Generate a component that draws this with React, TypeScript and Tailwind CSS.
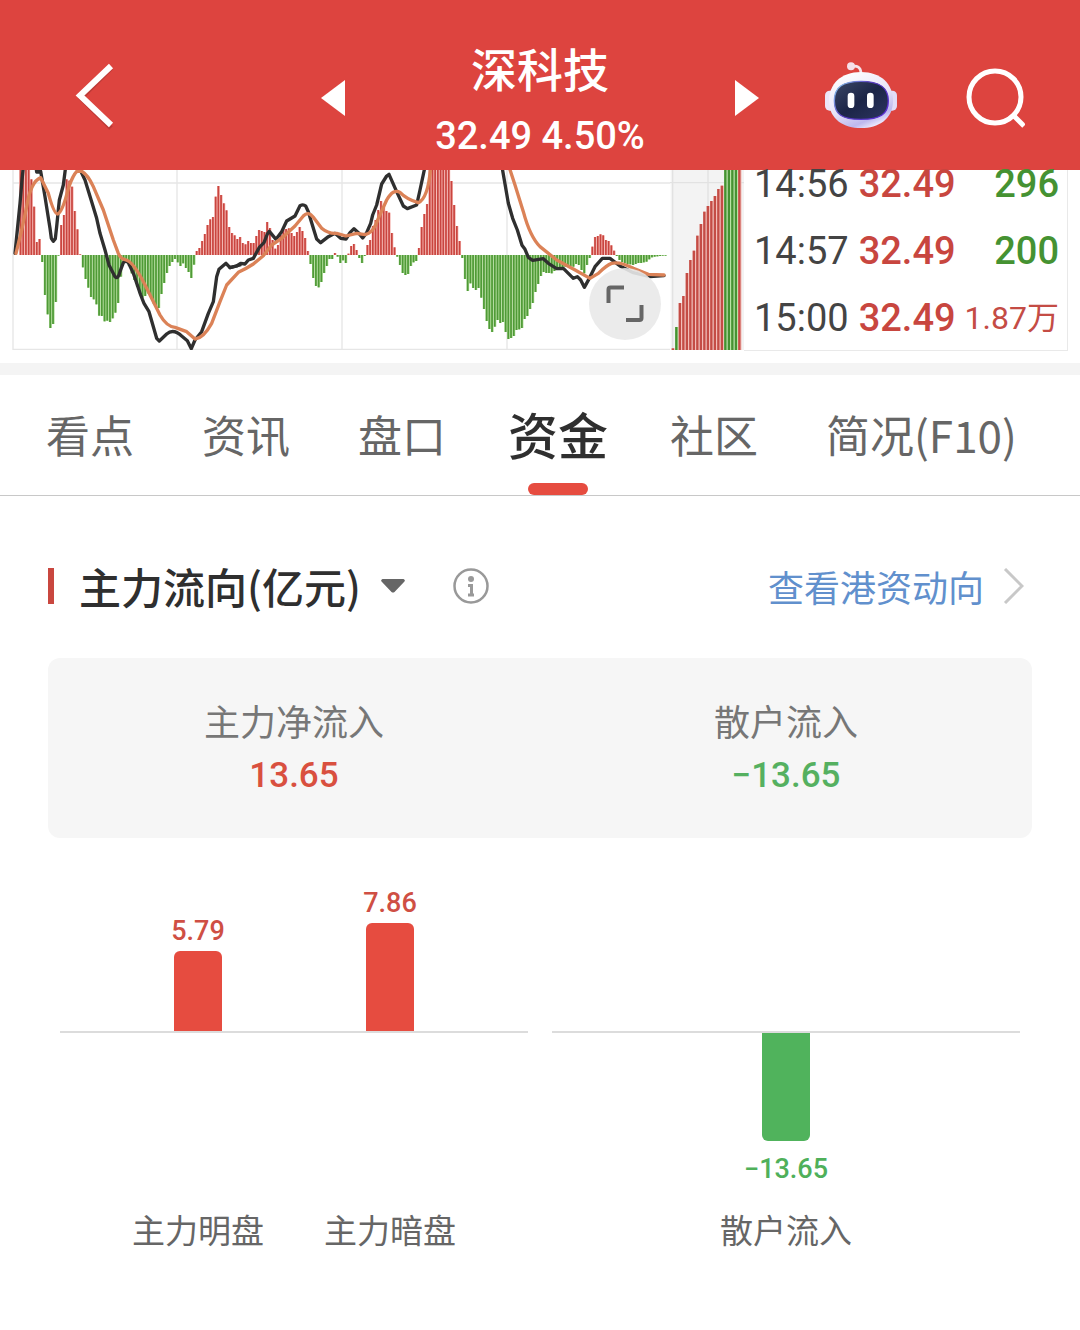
import React from "react";

const MACD_BARS: number[] = [
  -200, -200, -200, -200, 58, 140, 246, 237, 306, 405, 463, 504, 492, 426, 287, 195, 165, 58, 62, 80, 153, 208, 283,
  322, 357, 383, 411, 418, 433, 467, 468, 484, 482, 486, 475, 458, 429, 350, 308, 308, 318, 340, 360, 380, 400, 413,
  408, 400, 410, 430, 440, 444, 402, 369, 339, 318, 306, 297, 307, 318, 310, 324, 336, 354, 314, 273, 264, 243, 222,
  195, 178, 171, 110, 78, 105, 130, 151, 201, 219, 226, 237, 231, 249, 253, 243, 249, 249, 228, 210, 213, 216, 186,
  204, 240, 266, 255, 225, 208, 207, 205, 219, 228, 216, 201, 213, 234, 273, 312, 354, 378, 382, 366, 339, 318, 297,
  297, 279, 290, 309, 301, 309, 281, 258, 252, 270, 294, 309, 288, 255, 240, 198, 180, 150, 123, 140, 153, 158, 219,
  262, 290, 315, 339, 345, 342, 318, 307, 303, 264, 201, 162, 132, -200, -200, -200, -200, -200, -200, -200, -200, 63,
  135, 198, 243, 294, 357, 393, 370, 384, 390, 384, 413, 447, 483, 507, 516, 500, 480, 489, 486, 516, 537, 534, 528,
  510, 508, 504, 477, 468, 447, 429, 396, 372, 348, 336, 339, 339, 340, 333, 325, 325, 325, 320, 318, 318, 320, 312,
  315, 330, 340, 315, 294, 260, 231, 228, 223, 226, 240, 243, 256, 272, 288, 300, 306, 309, 312, 313, 315, 312, 309,
  309, 307, 305, 298, 292, 290, 289, 288, 287, 287,
];
const BASE = 285;
const FIRST_X = 62;
const STEP = (1997 - FIRST_X) / (MACD_BARS.length - 1);

const DEPTH_BARS: number[] = [565, 501, 429, 408, 339, 300, 272, 227, 192, 155, 138, 123, 108, 87, 77, 0, 0, 0, 0, 0];

const isGreenDepth = (i: number) => i === 1 || (i >= 15 && i <= 18);

function MacdChart() {
  return (
    <svg viewBox="0 30 2232 540" className="block w-full overflow-hidden" role="img" aria-label="MACD">
      <g stroke="#e6e6e6" strokeWidth="4" fill="none">
        <path d="M39 0V570M531 0V570M1026 0V570M1521 0V570M37 69H2010M37 568H2010" />
      </g>
      <rect x="2012" y="0" width="220" height="572" fill="#f3f3f3" />
      <path d="M2018 0V570M2124 0V570M2010 68H2232" stroke="#e2e2e2" strokeWidth="4" />
      {MACD_BARS.map((y, i) => {
        const up = y < BASE;
        const x = FIRST_X + i * STEP;
        return (
          <g key={i}>
            <rect
              x={x - 4}
              y={up ? y : BASE}
              width={8}
              height={Math.max(2, Math.abs(BASE - y))}
              fill={up ? "#f3aaa5" : "#a5d68b"}
            />
            <rect
              x={x - 3}
              y={up ? y : BASE}
              width={5}
              height={Math.max(2, Math.abs(BASE - y))}
              fill={up ? "#c9453f" : "#4f9a37"}
            />
          </g>
        );
      })}
      {DEPTH_BARS.map((y, i) => (
        <g key={i}>
          <rect
            x={2015 + i * 10.5}
            y={y}
            width="10"
            height={570 - y}
            fill={isGreenDepth(i) ? "#b9e3a4" : "#f3bdb8"}
          />
          <rect
            x={2015 + i * 10.5}
            y={y}
            width="7"
            height={570 - y}
            fill={isGreenDepth(i) ? "#459232" : "#c44c45"}
          />
        </g>
      ))}
      <g fill="none" stroke="#2f2f2f" strokeWidth="10" strokeLinejoin="round" strokeLinecap="round">
        <path d="M45 280L52 210L60 130L66 60L70 20M108 20L110 36L122 34L135 110L150 205L154 235L160 244L166 236L170 200L178 120L190 75L197 20M236 20L255 60L275 125L290 175L300 220L315 270L327 315L345 350Q354 360 360 335L370 308Q378 300 385 308L400 340L422 405L432 430L447 455L470 535L478 543L500 522Q520 505 545 528L562 542L574 566L585 540L605 515L625 460L640 425L650 350L657 328L678 310L690 323L720 315" />
        <path
          transform="translate(660 0)"
          d="M30 323L50 318L62 310L75 312L85 300L100 295L118 262L132 248L142 222L148 214L168 238L185 215L200 183L225 168L240 137Q250 132 257 138L265 155L280 205L290 237L302 248L325 230L345 220L362 235L378 237L390 218L402 206L415 218L428 234L440 218L452 190L458 165L470 135L485 72L500 48L507 43L518 68L530 95L550 138L562 146L590 135L600 90L615 20"
        />
        <path
          transform="translate(1320 0)"
          d="M186 20L192 55L205 130L218 175L232 210L246 256L255 268L265 292L278 301L310 296L325 310L350 326L370 325L400 355L412 350L422 360L433 382L448 355L465 320L487 295L510 295L540 318L580 338L630 350L672 347"
        />
      </g>
      <g fill="none" stroke="#db8257" strokeWidth="10" strokeLinejoin="round" strokeLinecap="round">
        <path d="M48 280L65 210L80 140Q92 65 122 53L145 100Q162 162 173 162Q188 155 205 85Q220 40 235 30Q260 35 280 80L310 150L340 240L355 280Q362 297 375 299Q400 302 440 385L480 465Q500 500 525 502L560 515L585 537Q610 535 635 490L660 425L680 375L715 337Q740 325 760 312L790 287L815 255L845 235L885 198L910 168Q925 152 940 172L965 205Q985 222 1010 220L1038 228L1070 220L1095 224Q1120 220 1135 175L1160 120Q1180 85 1200 97Q1220 118 1255 128Q1285 115 1292 20" />
        <path
          transform="translate(1320 0)"
          d="M207 20L225 75L250 155Q270 230 300 260L350 300L400 327L450 355L475 340Q500 315 515 310Q540 304 580 325L625 343L672 345"
        />
      </g>
    </svg>
  );
}

function RobotIcon() {
  return (
    <svg viewBox="0 0 216 200" className="block w-18" aria-hidden="true">
      <defs>
        <linearGradient id="shell" x1="0.2" y1="0" x2="0.7" y2="1">
          <stop offset="0" stopColor="#fff" />
          <stop offset="0.55" stopColor="#e8e4f8" />
          <stop offset="0.85" stopColor="#bdb8ee" />
          <stop offset="1" stopColor="#f4f2ff" />
        </linearGradient>
        <linearGradient id="face" x1="0" y1="0" x2="1" y2="1">
          <stop offset="0" stopColor="#3c4766" />
          <stop offset="0.5" stopColor="#1c2547" />
          <stop offset="1" stopColor="#2c3560" />
        </linearGradient>
        <linearGradient id="rim" x1="0" y1="0" x2="1" y2="0.6">
          <stop offset="0" stopColor="#8fd6f2" />
          <stop offset="0.5" stopColor="#5a3fc0" />
          <stop offset="1" stopColor="#5a2fd0" />
        </linearGradient>
      </defs>
      <path d="M80 13Q106 8 108 32" fill="none" stroke="#f6e3ea" strokeWidth="8" />
      <circle cx="78" cy="13" r="12" fill="#f6dfe8" />
      <rect x="0" y="86" width="32" height="60" rx="14" fill="#ece6f8" />
      <rect x="184" y="86" width="32" height="60" rx="14" fill="#e2dcf8" />
      <path
        d="M108 30C168 30 204 66 204 116C204 172 160 198 108 198C56 198 12 172 12 116C12 66 48 30 108 30Z"
        fill="url(#shell)"
      />
      <path
        d="M108 58C164 58 190 76 190 116C190 158 164 172 108 172C52 172 28 158 28 116C28 76 52 58 108 58Z"
        fill="url(#face)"
        stroke="url(#rim)"
        strokeWidth="4"
      />
      <rect x="68" y="92" width="20" height="46" rx="10" fill="#fff" />
      <rect x="126" y="92" width="20" height="46" rx="10" fill="#fff" />
    </svg>
  );
}

function Header() {
  return (
    <header className="grid h-[170px] grid-cols-[1fr_438px_1fr] bg-[#dd443f] text-white">
      <div className="pt-[62px] pl-[74px]">
        <button type="button" aria-label="返回" className="block">
          <svg viewBox="0 0 42 68" className="block w-[42px]" fill="none" aria-hidden="true">
            <path d="M37 6L7 36L37 66" stroke="#a93430" strokeOpacity="0.6" strokeWidth="5" />
            <path d="M37 4L6 33.500L37 63" stroke="#fff" strokeWidth="6" />
          </svg>
        </button>
      </div>
      <div className="flex justify-between">
        <button type="button" aria-label="上一只" className="mt-20 block h-9">
          <svg viewBox="0 0 24 36" className="block h-9" aria-hidden="true">
            <path d="M24 0V36L0 18Z" fill="#fff" />
          </svg>
        </button>
        <div className="flex flex-col items-center pt-9">
          <h1 className="text-[46px] leading-[62px] font-medium">深科技</h1>
          <p className="font-['Roboto'] text-[38px] leading-[76px] font-medium whitespace-nowrap">32.49 4.50%</p>
        </div>
        <button type="button" aria-label="下一只" className="mt-20 block h-9">
          <svg viewBox="0 0 24 36" className="block h-9" aria-hidden="true">
            <path d="M0 0V36L24 18Z" fill="#fff" />
          </svg>
        </button>
      </div>
      <div className="flex items-start justify-end gap-[66px] pt-[62px] pr-[55px]">
        <button type="button" aria-label="智能助手" className="block">
          <RobotIcon />
        </button>
        <button type="button" aria-label="搜索" className="mt-1 block">
          <svg viewBox="0 0 62 62" className="block w-[62px]" fill="none" stroke="#fff" strokeWidth="5" aria-hidden="true">
            <circle cx="32" cy="31" r="26" />
            <path d="M50 49L61 60" />
          </svg>
        </button>
      </div>
    </header>
  );
}

const TRADES = [
  { time: "14:56", price: "32.49", volume: "296", tone: "text-[38px] text-[#459232]" },
  { time: "14:57", price: "32.49", volume: "200", tone: "text-[38px] text-[#459232]" },
  { time: "15:00", price: "32.49", volume: "1.87万", tone: "text-[32px] font-normal text-[#c44c45]" },
];

function Quote() {
  return (
    <section className="flex h-[193px]">
      <div className="relative w-[744px] shrink-0">
        <MacdChart />
        <button
          type="button"
          aria-label="全屏"
          className="absolute top-[98px] left-[589px] size-18 rounded-full bg-[#e9e9e9]/90"
        >
          <svg viewBox="0 0 72 72" className="block" fill="none" stroke="#666" strokeWidth="4" aria-hidden="true">
            <path d="M19.500 35V21.500Q19.500 19.500 21.500 19.500H35M52.500 37V50Q52.500 52 50.500 52H37" />
          </svg>
        </button>
      </div>
      <div className="mr-3 h-[181px] flex-1 border-r border-b border-[#e9e9e9]">
        <table className="w-full font-['Roboto','Noto_Sans_CJK_SC',sans-serif] font-medium whitespace-nowrap">
          <tbody className="align-top leading-[28px]">
            {TRADES.map((t, i) => (
              <tr key={t.time} className={i < 2 ? "h-[67px]" : ""}>
                <td className="w-[104px] pl-2.5 text-[38px] font-normal text-[#444]">{t.time}</td>
                <td className="pl-2.5 text-[38px] text-[#c8463f]">{t.price}</td>
                <td className={`pr-2 text-right ${t.tone}`}>{t.volume}</td>
              </tr>
            ))}
          </tbody>
        </table>
      </div>
    </section>
  );
}

const TABS = ["看点", "资讯", "盘口", "资金", "社区", "简况(F10)"];

function Tabs() {
  return (
    <nav className="flex h-[121px] gap-17 border-b border-[#c8c8c8] pl-[46px] whitespace-nowrap">
      {TABS.map((tab) =>
        tab === "资金" ? (
          <button
            key={tab}
            type="button"
            aria-current="page"
            className="flex w-22 flex-col items-center justify-end text-[50px] leading-[100px] font-medium text-[#2f2f2f]"
          >
            {tab}
            <span className="h-3 w-15 rounded-full bg-[#e64c40]" />
          </button>
        ) : (
          <button key={tab} type="button" className="flex text-[44px] leading-[118px] text-[#666]">
            {tab}
          </button>
        ),
      )}
    </nav>
  );
}

function SectionTitle() {
  return (
    <div className="flex items-center pt-[60px] pr-14 pl-12">
      <span className="h-9 w-1.5 bg-[#c9473f]" />
      <button type="button" className="flex items-center text-[42px] leading-[60px] font-medium text-[#2f2f2f]">
        <span className="ml-[25px]">主力流向(亿元)</span>
        <svg viewBox="0 0 24 14" className="ml-5 block w-6" aria-hidden="true">
          <path d="M1.500 0H22.500Q25 1 23 3L13.500 13Q12 14 10.500 13L1 3Q-1 1 1.500 0Z" fill="#666" />
        </svg>
      </button>
      <button type="button" aria-label="说明" className="ml-12 block">
        <svg viewBox="0 0 36 36" className="block size-9" fill="none" stroke="#999" aria-hidden="true">
          <circle cx="18" cy="18" r="16.500" strokeWidth="2.500" />
          <circle cx="18" cy="11" r="3" fill="#999" stroke="none" />
          <path d="M15 17.500H18.500V27M15 27H21" strokeWidth="3" />
        </svg>
      </button>
      <a href="#hk" className="ml-auto flex items-center gap-[18px] text-[36px] leading-[60px] text-[#6190cd]">
        查看港资动向
        <svg viewBox="0 0 22 36" className="block h-9" fill="none" stroke="#c8c8c8" strokeWidth="3" aria-hidden="true">
          <path d="M3 1L20 18L3 35" />
        </svg>
      </a>
    </div>
  );
}

function Summary() {
  return (
    <dl className="mx-12 mt-[42px] grid h-[180px] grid-cols-2 rounded-xl bg-[#f6f6f6] pt-[34px] text-center">
      <div>
        <dt className="text-[36px] leading-[56px] text-[#777]">主力净流入</dt>
        <dd className="font-['Roboto'] text-[35px] leading-[56px] font-medium text-[#d9503f]">13.65</dd>
      </div>
      <div>
        <dt className="text-[36px] leading-[56px] text-[#777]">散户流入</dt>
        <dd className="font-['Roboto'] text-[35px] leading-[56px] font-medium text-[#55b060]">−13.65</dd>
      </div>
    </dl>
  );
}

function UpBar({ value, label, height }: { value: string; label: string; height: number }) {
  return (
    <div className="flex w-48 flex-col items-center">
      <div className="flex h-[150px] flex-col items-center justify-end">
        <span className="font-['Roboto'] text-[27px] leading-[40px] font-medium text-[#cf4f44]">{value}</span>
        <span className="w-12 rounded-t-md bg-[#e64c40]" style={{ height }} />
      </div>
      <span className="mt-[174px] text-[33px] leading-[48px] text-[#666]">{label}</span>
    </div>
  );
}

function FlowChart() {
  return (
    <section className="mx-15 mt-[43px] grid grid-cols-2 gap-6">
      <div className="flex justify-center bg-[linear-gradient(#dcdcdc,#dcdcdc)] bg-[length:100%_2px] bg-[position:0_150px] bg-no-repeat">
        <UpBar value="5.79" label="主力明盘" height={80} />
        <UpBar value="7.86" label="主力暗盘" height={108} />
      </div>
      <div className="flex flex-col items-center pt-[150px]">
        <span className="h-0.5 w-full bg-[#dcdcdc]" />
        <span className="h-27 w-12 rounded-b-md bg-[#50b35c]" />
        <span className="mt-2 font-['Roboto'] text-[27px] leading-[40px] font-medium text-[#4fb05a]">−13.65</span>
        <span className="mt-4 text-[33px] leading-[48px] text-[#666]">散户流入</span>
      </div>
    </section>
  );
}

export default function App() {
  return (
    <main className="min-h-screen bg-white font-['Noto_Sans_CJK_SC',sans-serif]">
      <Header />
      <Quote />
      <div className="h-3 bg-[#f4f4f4]" />
      <Tabs />
      <SectionTitle />
      <Summary />
      <FlowChart />
    </main>
  );
}
